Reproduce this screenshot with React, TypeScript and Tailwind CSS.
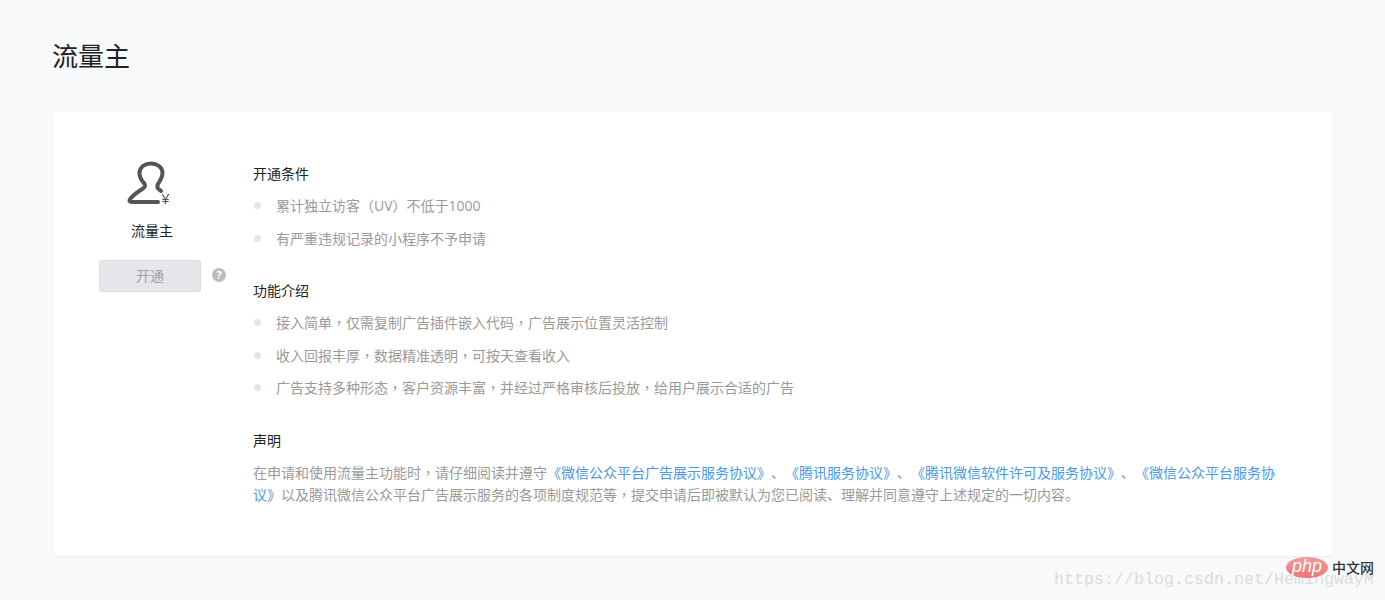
import React from 'react';

const cjk = { fontFamily: '"Open Sans", "Noto Sans CJK SC", sans-serif' };

// commas and brackets sit centred in the reference, which is how the TC cut draws them
function Zh({ text }: { text: string }) {
  return (
    <>
      {text.split(/([，（）])/).map((part, i) =>
        part === '，' || part === '（' || part === '）' ? (
          <span key={i} className="font-['Noto_Sans_CJK_TC'] leading-[0]">{part}</span>
        ) : (
          <span key={i}>{part}</span>
        ),
      )}
    </>
  );
}

function Section({ title, items, className = '' }: { title: string; items: string[]; className?: string }) {
  return (
    <div className={className}>
      <h3 className="text-[14px] leading-[20px] font-normal text-[#222]">{title}</h3>
      <ul className="mt-[5.5px]">
        {items.map((item) => (
          <li key={item} className="flex items-center h-[32.5px] text-[14px] text-[#9a9a9a]">
            <span className="w-[7px] h-[7px] rounded-full bg-[#e4e4ec] ml-[1px] mr-[15px]" />
            <span><Zh text={item} /></span>
          </li>
        ))}
      </ul>
    </div>
  );
}

function Link({ children }: { children: React.ReactNode }) {
  return <a className="text-[#4a98ea]">{children}</a>;
}

export default function App() {
  return (
    <div className="relative h-[600px] overflow-hidden bg-[#f8f9fb] pl-[53px] pr-[52px] [text-spacing-trim:space-all]" style={cjk}>
      <h1 className="pt-[37px] -ml-[1px] text-[26px] leading-[38px] font-normal text-[#222]">流量主</h1>

      <div className="mt-[37px] h-[444px] bg-white rounded-[4px] shadow-[0_1px_3px_rgba(0,0,0,0.06)] flex">
        {/* left column */}
        <div className="w-[200px] flex flex-col items-center pt-[48px]">
          <svg width="48" height="46" viewBox="126 160 48 46" className="-ml-[6px]" fill="none">
            <path
              d="M158 202H132Q128 202 130.500 198.500C134 194.500 139 191 143 188.500C145.500 187 145.500 185 144 183C141 180 139.500 177 139.500 173C139.500 167 145 163.500 151 163.500C157 163.500 162.500 167 162.500 173C162.500 177 160 181 158 184C157 186 157 187 158 188.500L161 191"
              stroke="#555"
              strokeWidth="4"
              strokeLinecap="round"
              strokeLinejoin="round"
            />
            <text x="161.500" y="204" fontSize="14" fill="#555" fontFamily="Liberation Sans">¥</text>
          </svg>
          <div className="mt-[15px] -ml-[2px] text-[14px] leading-[20px] text-[#222]">流量主</div>
          <div className="mt-[19px] -ml-[6px] relative">
            <button className="block w-[102px] h-[32px] pb-[2px] rounded-[2px] border border-[#dcdce2] bg-[#e5e5ea] text-[14px] text-[#a0a0a6]">
              开通
            </button>
            <span className="absolute left-[113px] top-[8px] w-[14px] h-[14px] rounded-full bg-[#bdbdbd] text-white text-[11px] leading-[14px] font-bold text-center">
              ?
            </span>
          </div>
        </div>

        {/* right column */}
        <div className="flex-1 pt-[52px] pr-[50px]">
          <Section title="开通条件" items={['累计独立访客（UV）不低于1000', '有严重违规记录的小程序不予申请']} />
          <Section
            className="mt-[26.5px]"
            title="功能介绍"
            items={[
              '接入简单，仅需复制广告插件嵌入代码，广告展示位置灵活控制',
              '收入回报丰厚，数据精准透明，可按天查看收入',
              '广告支持多种形态，客户资源丰富，并经过严格审核后投放，给用户展示合适的广告',
            ]}
          />
          <div className="mt-[26.5px]">
            <h3 className="text-[14px] leading-[20px] font-normal text-[#222]">声明</h3>
            <p className="mt-[11px] text-[14px] leading-[22px] text-[#9a9a9a]">
              <Zh text="在申请和使用流量主功能时，请仔细阅读并遵守" /><Link>《微信公众平台广告展示服务协议》</Link>、<Link>《腾讯服务协议》</Link>、<Link>《腾讯微信软件许可及服务协议》</Link>、<Link>《微信公众平台服务协议》</Link><Zh text="以及腾讯微信公众平台广告展示服务的各项制度规范等，提交申请后即被默认为您已阅读、理解并同意遵守上述规定的一切内容。" />
            </p>
          </div>
        </div>
      </div>

      {/* watermark */}
      <div className="absolute left-[1054px] top-[569px] text-[16.67px] leading-[22px] text-[#dcdcdc] whitespace-nowrap" style={{ fontFamily: '"Liberation Mono", monospace' }}>
        https://blog.csdn.net/HemingwayM
      </div>
      <div className="absolute left-[1286px] top-[557px] w-[42px] h-[21px] rounded-[50%] bg-gradient-to-b from-[#f49a9a] to-[#ee7575] text-white text-[18px] leading-[18px] italic text-center" style={{ fontFamily: '"Liberation Sans", sans-serif' }}>
        php
      </div>
      <div className="absolute left-[1332px] top-[558px] text-[14px] leading-[20px] font-medium text-[#333]">中文网</div>
    </div>
  );
}
